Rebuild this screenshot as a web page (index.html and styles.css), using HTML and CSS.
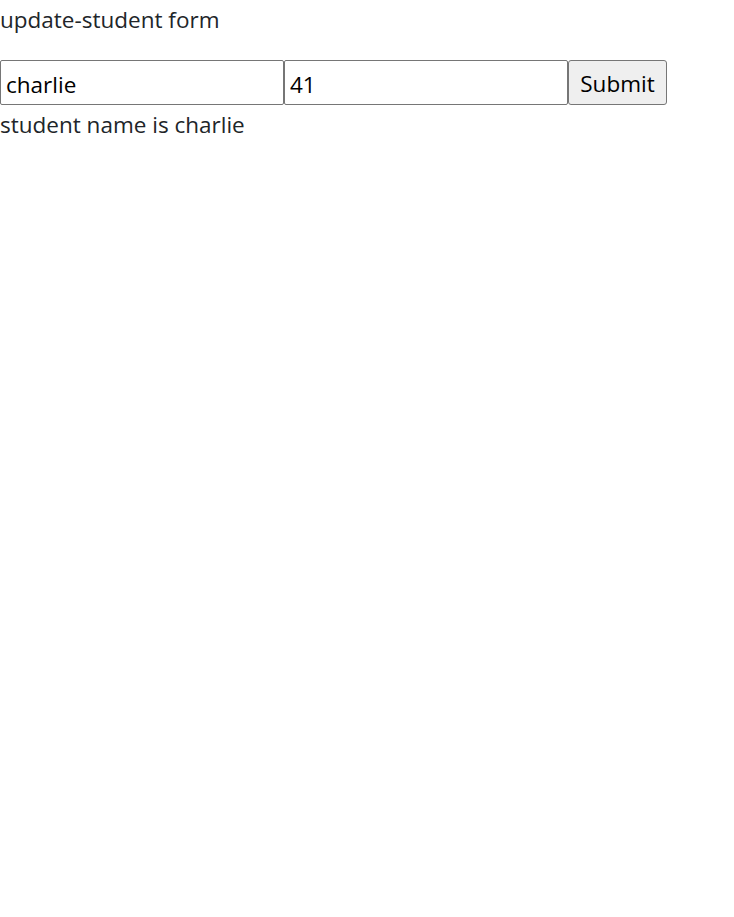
FILE: index.html
```html
<!DOCTYPE html>
<html>
<head>
<meta charset="utf-8">
<link rel="stylesheet" href="styles.css">
</head>
<body>
<div class="app">
  <p class="title">update-student form</p>
  <form class="form">
    <input class="field" type="text" value="charlie">
    <input class="field" type="text" value="41">
    <button class="btn" type="button">Submit</button>
  </form>
  <p class="result">student name is charlie</p>
</div>
</body>
</html>
```
FILE: styles.css
```css
html, body {
  margin: 0;
  padding: 0;
  background: #fff;
}
body {
  font-family: "Open Sans", "Noto Sans", sans-serif;
  font-size: 22.5px;
  color: #212529;
}
.app {
  display: flex;
  flex-direction: column;
}
.title {
  margin: 0 0 24px 0;
  padding-top: 3px;
  line-height: 33px;
  height: 33px;
}
.form {
  display: flex;
  margin: 0;
}
.field {
  box-sizing: border-box;
  width: 284px;
  height: 45px;
  margin: 0;
  padding: 3px 5px 0;
  border: 1px solid #767676;
  border-radius: 2px;
  font-family: "Open Sans", "Noto Sans", sans-serif;
  font-size: 22.5px;
  color: #000;
  background: #fff;
}
.btn {
  box-sizing: border-box;
  width: 99px;
  height: 45px;
  margin: 0;
  padding: 2px 4px 0;
  border: 1px solid #767676;
  border-radius: 3px;
  background: #efefef;
  font-family: "Open Sans", "Noto Sans", sans-serif;
  font-size: 22.5px;
  color: #000;
}
.result {
  margin: 0;
  line-height: 33px;
  padding-top: 3px;
}
```
